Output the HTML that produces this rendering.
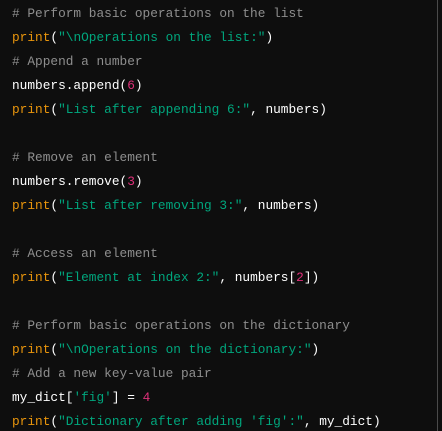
<!DOCTYPE html><html><head><style>
html,body{margin:0;padding:0;background:#0e0e0e;width:442px;height:431px;overflow:hidden}
pre{margin:0;padding:2px 0 0 12px;font-family:"Liberation Mono",monospace;font-size:12.8px;line-height:24px;color:#fff;font-weight:normal}
.c{color:#8e8e8e}.p{color:#e9950c}.s{color:#00a67d}.n{color:#df3079}
.b{position:absolute;left:437px;top:0;width:1px;height:431px;background:#4a4a4a}
</style></head><body><div class="b"></div><pre><span class="c"># Perform basic operations on the list</span>
<span class="p">print</span>(<span class="s">"\nOperations on the list:"</span>)
<span class="c"># Append a number</span>
numbers.append(<span class="n">6</span>)
<span class="p">print</span>(<span class="s">"List after appending 6:"</span>, numbers)

<span class="c"># Remove an element</span>
numbers.remove(<span class="n">3</span>)
<span class="p">print</span>(<span class="s">"List after removing 3:"</span>, numbers)

<span class="c"># Access an element</span>
<span class="p">print</span>(<span class="s">"Element at index 2:"</span>, numbers[<span class="n">2</span>])

<span class="c"># Perform basic operations on the dictionary</span>
<span class="p">print</span>(<span class="s">"\nOperations on the dictionary:"</span>)
<span class="c"># Add a new key-value pair</span>
my_dict[<span class="s">'fig'</span>] = <span class="n">4</span>
<span class="p">print</span>(<span class="s">"Dictionary after adding 'fig':"</span>, my_dict)</pre></body></html>
